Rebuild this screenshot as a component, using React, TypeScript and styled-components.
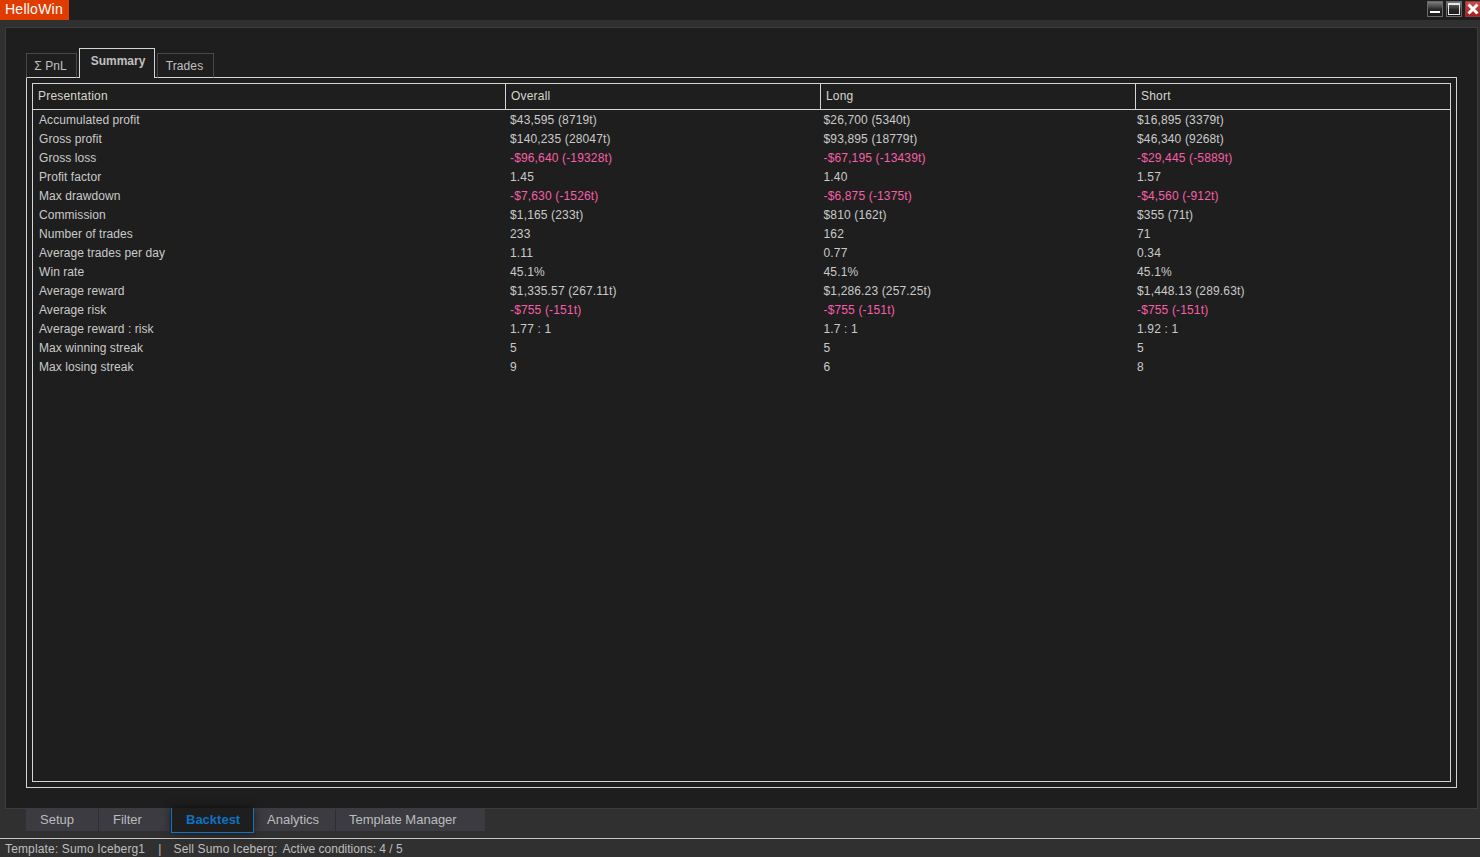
import React from 'react'
import styled, { createGlobalStyle } from 'styled-components'

const GlobalStyle = createGlobalStyle`
  html, body {
    margin: 0;
    padding: 0;
    height: 100%;
    background: #303030;
    overflow: hidden;
  }
  #root {
    height: 100%;
  }
`

const Shell = styled.div`
  display: flex;
  flex-direction: column;
  height: 857px;
  font-family: 'Liberation Sans', Arial, sans-serif;
  font-size: 12px;
  color: #cacaca;
`

const TitleBar = styled.div`
  display: flex;
  justify-content: space-between;
  height: 20px;
  background: #1e1e1e;
  overflow: hidden;
`

const Brand = styled.div`
  width: 69px;
  height: 20px;
  box-sizing: border-box;
  padding-left: 5px;
  background: #e03c00;
  color: #fff;
  font-size: 14px;
  letter-spacing: 0.25px;
  line-height: 18px;
`

const WindowButtons = styled.div`
  display: flex;
  gap: 3px;
  padding-top: 1px;
  margin-right: -1px;
`

const WindowButton = styled.div<{ $close?: boolean }>`
  width: 16px;
  height: 16px;
  box-sizing: border-box;
  display: flex;
  align-items: center;
  justify-content: center;
  border: 1px solid ${({ $close }) => ($close ? '#8f3a3a' : '#6a6a6a')};
  background: ${({ $close }) =>
    $close ? 'linear-gradient(#d04a4a, #a81e1e)' : 'linear-gradient(#7c7c7c, #262626 55%, #1c1c1c)'};
`

const Workspace = styled.div`
  flex: 1;
  display: flex;
  flex-direction: column;
  min-height: 0;
  padding: 7px 2px 0 5px;
`

const Panel = styled.div`
  height: 782px;
  box-sizing: border-box;
  display: flex;
  flex-direction: column;
  padding: 20px;
  background: #1e1e1e;
  border: 1px solid #3c3c3c;
`

const InnerTabs = styled.div`
  display: flex;
  align-items: flex-end;
  gap: 2px;
  height: 30px;
  position: relative;
  z-index: 1;
  margin-bottom: -1px;
`

const InnerTab = styled.div<{ $active?: boolean; $width: number }>`
  width: ${({ $width }) => $width}px;
  box-sizing: border-box;
  height: ${({ $active }) => ($active ? 30 : 25)}px;
  padding: ${({ $active }) => ($active ? '5px 0 0 2px' : '5px 2px 0 0')};
  text-align: center;
  line-height: 15px;
  letter-spacing: ${({ $active }) => ($active ? 0 : 0.1)}px;
  background: #1e1e1e;
  border: 1px solid ${({ $active }) => ($active ? '#d4d4d4' : '#484848')};
  border-bottom: ${({ $active }) => ($active ? 'none' : '1px solid #d4d4d4')};
  font-weight: ${({ $active }) => ($active ? 700 : 400)};
  color: ${({ $active }) => ($active ? '#c0c0c0' : '#c0c0c0')};
`

const Frame = styled.div`
  flex: 1;
  min-height: 0;
  box-sizing: border-box;
  padding: 5px;
  border: 1px solid #d4d4d4;
`

const ReportTable = styled.div`
  height: 100%;
  box-sizing: border-box;
  border: 1px solid #d4d4d4;
`

const HeaderRow = styled.div`
  display: grid;
  grid-template-columns: 472px 315px 315px 1fr;
  height: 25px;
  border-bottom: 1px solid #d4d4d4;
`

const HeaderCell = styled.div<{ $first?: boolean }>`
  padding-left: 5px;
  border-left: ${({ $first }) => ($first ? 'none' : '1px solid #d4d4d4')};
  line-height: 25px;
  letter-spacing: 0.2px;
  color: #d6d6ca;
`

const RowList = styled.div`
  padding-top: 1px;
`

const BodyRow = styled.div`
  display: grid;
  grid-template-columns: 471px 313.5px 313.5px 1fr;
  height: 19px;
  padding-left: 6px;
  line-height: 19px;
`

const BodyCell = styled.div<{ $negative?: boolean; $label?: boolean }>`
  white-space: nowrap;
  letter-spacing: ${({ $label }) => ($label ? 0.07 : 0.15)}px;
  color: ${({ $negative }) => ($negative ? '#f65fa9' : '#cacaca')};
`

const BottomTabs = styled.div`
  display: flex;
  height: 29px;
  padding-left: 21px;
  align-items: flex-start;
`

const BottomTab = styled.div<{ $active?: boolean; $width: number; $inset?: number }>`
  width: ${({ $width }) => $width}px;
  box-sizing: border-box;
  height: 22px;
  padding-left: ${({ $inset }) => $inset ?? 14}px;
  font-size: 13px;
  line-height: 22px;
  background: #3b3b41;
  border-right: 1px solid #2e2e2e;
  color: #bcbcbc;
  ${({ $active }) =>
    $active &&
    `
    position: relative;
    height: 25px;
    margin-top: -1px;
    line-height: 24px;
    background: #1e1e1e;
    border: 1px solid #1272c4;
    border-top: none;
    box-shadow: 0 0 10px rgba(0, 0, 0, 0.55);
    color: #0f72c4;
    font-weight: 700;
  `}
`

const StatusBar = styled.div`
  display: flex;
  height: 19px;
  box-sizing: border-box;
  padding-left: 5px;
  border-top: 1px solid #c4c4c4;
  line-height: 20px;
  letter-spacing: 0.15px;
  white-space: nowrap;
  color: #bebebe;
`

const StatusItem = styled.span<{ $gap?: number; $tight?: boolean }>`
  margin-left: ${({ $gap }) => $gap ?? 0}px;
  letter-spacing: ${({ $tight }) => ($tight ? 0 : 0.15)}px;
`

type Row = [string, string, string, string]

const rows: Row[] = [
  ['Accumulated profit', '$43,595 (8719t)', '$26,700 (5340t)', '$16,895 (3379t)'],
  ['Gross profit', '$140,235 (28047t)', '$93,895 (18779t)', '$46,340 (9268t)'],
  ['Gross loss', '-$96,640 (-19328t)', '-$67,195 (-13439t)', '-$29,445 (-5889t)'],
  ['Profit factor', '1.45', '1.40', '1.57'],
  ['Max drawdown', '-$7,630 (-1526t)', '-$6,875 (-1375t)', '-$4,560 (-912t)'],
  ['Commission', '$1,165 (233t)', '$810 (162t)', '$355 (71t)'],
  ['Number of trades', '233', '162', '71'],
  ['Average trades per day', '1.11', '0.77', '0.34'],
  ['Win rate', '45.1%', '45.1%', '45.1%'],
  ['Average reward', '$1,335.57 (267.11t)', '$1,286.23 (257.25t)', '$1,448.13 (289.63t)'],
  ['Average risk', '-$755 (-151t)', '-$755 (-151t)', '-$755 (-151t)'],
  ['Average reward : risk', '1.77 : 1', '1.7 : 1', '1.92 : 1'],
  ['Max winning streak', '5', '5', '5'],
  ['Max losing streak', '9', '6', '8'],
]

const App: React.FC = () => (
  <>
    <GlobalStyle />
    <Shell>
      <TitleBar>
        <Brand>HelloWin</Brand>
        <WindowButtons>
          <WindowButton>
            <svg width="14" height="14" viewBox="0 0 14 14">
              <rect x="2" y="9" width="10" height="2" fill="#fff" />
            </svg>
          </WindowButton>
          <WindowButton>
            <svg width="14" height="14" viewBox="0 0 14 14">
              <rect x="1.5" y="1.5" width="11" height="11" fill="none" stroke="#e8e8e8" />
              <rect x="1" y="1" width="12" height="2" fill="#e8e8e8" />
            </svg>
          </WindowButton>
          <WindowButton $close>
            <svg width="14" height="14" viewBox="0 0 14 14">
              <path d="M2.5 2.5 L11.5 11.5 M11.5 2.5 L2.5 11.5" stroke="#fff" strokeWidth="3" />
            </svg>
          </WindowButton>
        </WindowButtons>
      </TitleBar>
      <Workspace>
        <Panel>
          <InnerTabs>
            <InnerTab $width={51}>Σ PnL</InnerTab>
            <InnerTab $width={76} $active>Summary</InnerTab>
            <InnerTab $width={57}>Trades</InnerTab>
          </InnerTabs>
          <Frame>
            <ReportTable>
              <HeaderRow>
                <HeaderCell $first>Presentation</HeaderCell>
                <HeaderCell>Overall</HeaderCell>
                <HeaderCell>Long</HeaderCell>
                <HeaderCell>Short</HeaderCell>
              </HeaderRow>
              <RowList>
                {rows.map((row) => (
                  <BodyRow key={row[0]}>
                    {row.map((value, i) => (
                      <BodyCell key={i} $label={i === 0} $negative={value.startsWith('-')}>
                        {value}
                      </BodyCell>
                    ))}
                  </BodyRow>
                ))}
              </RowList>
            </ReportTable>
          </Frame>
        </Panel>
        <BottomTabs>
          <BottomTab $width={73}>Setup</BottomTab>
          <BottomTab $width={72}>Filter</BottomTab>
          <BottomTab $width={83} $active>Backtest</BottomTab>
          <BottomTab $width={82} $inset={13}>Analytics</BottomTab>
          <BottomTab $width={150} $inset={13}>Template Manager</BottomTab>
        </BottomTabs>
      </Workspace>
      <StatusBar>
        <StatusItem>Template: Sumo Iceberg1</StatusItem>
        <StatusItem $gap={13}>|</StatusItem>
        <StatusItem $gap={12}>Sell Sumo Iceberg:</StatusItem>
        <StatusItem $gap={5} $tight>Active conditions: 4 / 5</StatusItem>
      </StatusBar>
    </Shell>
  </>
)

export default App
